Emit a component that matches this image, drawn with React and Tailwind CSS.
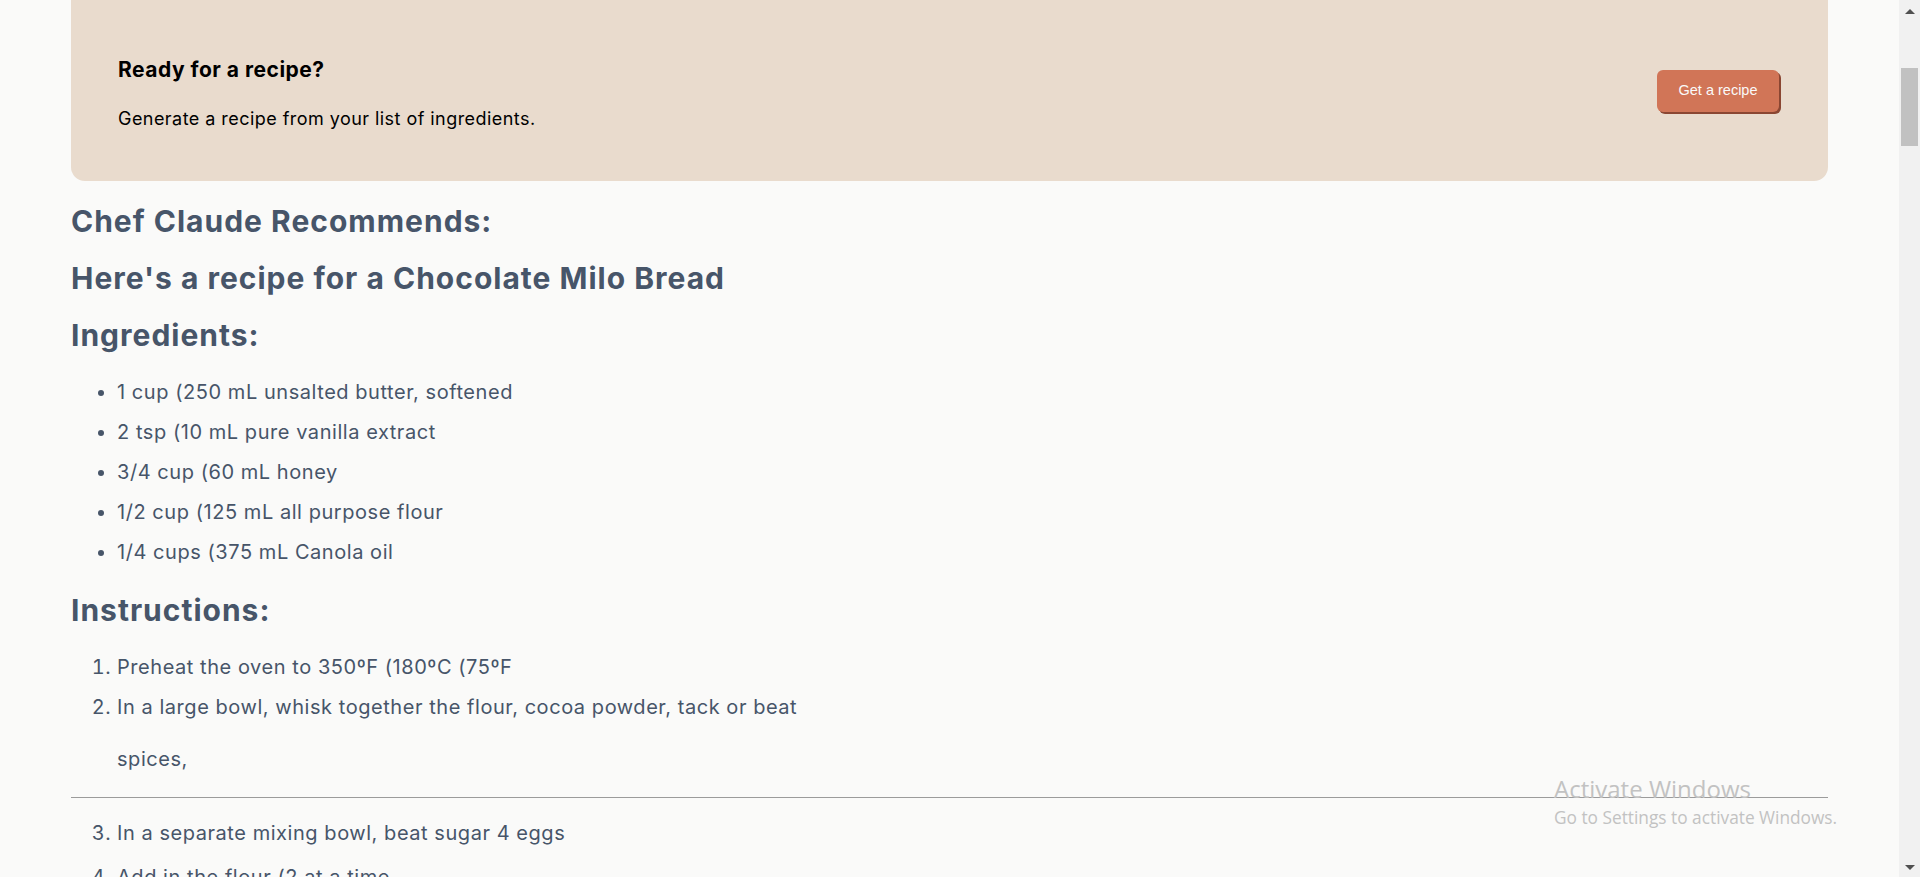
export default function App() {
  const ingredients = [
    "1 cup (250 mL unsalted butter, softened",
    "2 tsp (10 mL pure vanilla extract",
    "3/4 cup (60 mL honey",
    "1/2 cup (125 mL all purpose flour",
    "1/4 cups (375 mL Canola oil",
  ];
  return (
    <div className="relative flex h-[877px] w-[1920px] overflow-hidden bg-[#fafaf9] font-['Inter',sans-serif]">
      <main className="flex-1 px-[71px] text-[#475569]">
        <section className="flex h-[181px] items-center justify-between rounded-b-[14px] bg-[#e9dbcd] pl-[47px] pr-[49px]">
          <div className="pt-[7px] text-black">
            <h3 className="text-[21px] font-bold leading-[28px] tracking-[0.5px]">Ready for a recipe?</h3>
            <p className="mt-[22px] text-[18px] leading-[26px] tracking-[0.45px]">Generate a recipe from your list of ingredients.</p>
          </div>
          <button className="h-[42px] w-[122px] rounded-[6px] bg-[#d17557] font-['Liberation_Sans',sans-serif] text-[14.5px] text-[#fafaf9] shadow-[2px_2px_0_#8a4632]">
            Get a recipe
          </button>
        </section>

        <h2 className="mt-[22px] text-[30px] font-bold leading-[36px] tracking-[1px]">Chef Claude Recommends:</h2>
        <h2 className="mt-[21px] text-[30px] font-bold leading-[36px] tracking-[1px]">Here's a recipe for a Chocolate Milo Bread</h2>
        <h2 className="mt-[21px] text-[30px] font-bold leading-[36px] tracking-[1px]">Ingredients:</h2>
        <ul className="mt-[19px] list-disc pl-[46px] text-[20px] leading-[40px] tracking-[0.55px]">
          {ingredients.map((t) => (
            <li key={t}>{t}</li>
          ))}
        </ul>
        <h2 className="mt-[20px] text-[30px] font-bold leading-[36px] tracking-[1px]">Instructions:</h2>
        <ol className="mt-[19px] list-decimal pl-[46px] text-[20px] leading-[40px] tracking-[0.55px]">
          <li>Preheat the oven to 350ºF (180ºC (75ºF</li>
          <li>
            In a large bowl, whisk together the flour, cocoa powder, tack or beat
            <p className="mt-[12px]">spices,</p>
          </li>
        </ol>
        <hr className="mt-[18px] border-t border-[#9b9b9b]" />
        <ol start={3} className="mt-[15px] list-decimal pl-[46px] text-[20px] leading-[40px] tracking-[0.55px]">
          <li>In a separate mixing bowl, beat sugar 4 eggs</li>
          <li className="mt-[4px]">Add in the flour (2 at a time</li>
        </ol>
      </main>

      <aside className="relative flex w-[21px] flex-col items-center bg-[#f1f1f1]">
        <div className="mt-[9px] h-0 w-0 border-x-[5px] border-b-[5px] border-x-transparent border-b-[#505050]" />
        <div className="mt-[54px] h-[78px] w-[17px] bg-[#c1c1c1]" />
        <div className="mt-auto mb-[7px] h-0 w-0 border-x-[5px] border-t-[5px] border-x-transparent border-t-[#505050]" />
      </aside>

      <div className="pointer-events-none absolute left-[1554px] top-[774px] font-['Open_Sans',sans-serif] text-[#c2c2c2]">
        <div className="text-[24px] leading-[30px]">Activate Windows</div>
        <div className="mt-[3px] text-[17.3px] leading-[22px]">Go to Settings to activate Windows.</div>
      </div>
    </div>
  );
}
